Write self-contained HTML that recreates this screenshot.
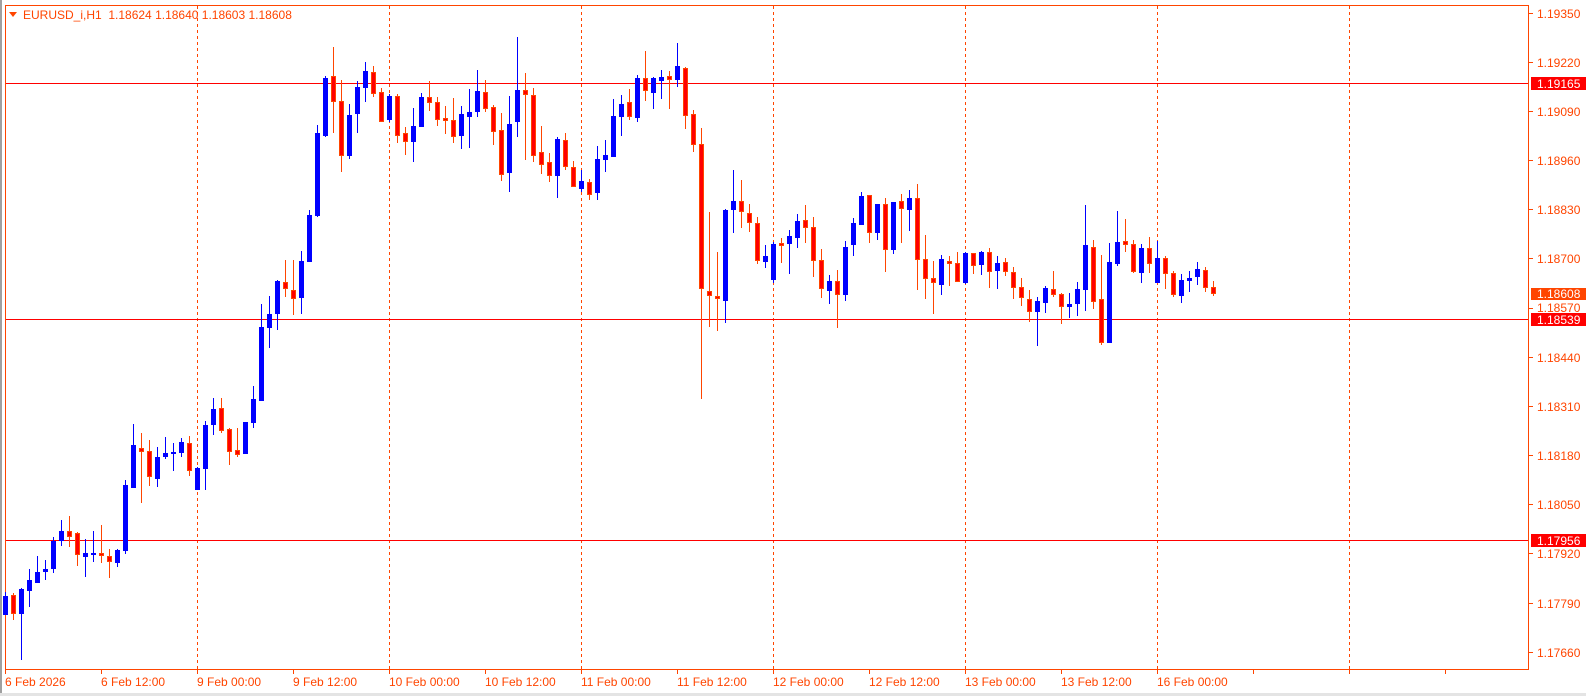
<!DOCTYPE html>
<html><head><meta charset="utf-8"><style>
html,body{margin:0;padding:0;background:#fff;width:1586px;height:696px;overflow:hidden}
svg{display:block}
text{font-family:"Liberation Sans",Arial,sans-serif;font-size:12px}
</style></head><body>
<svg width="1586" height="696" viewBox="0 0 1586 696" xmlns="http://www.w3.org/2000/svg">
<rect x="0" y="0" width="1586" height="696" fill="#fff"/>
<rect x="0" y="0" width="2" height="694" fill="#a0a0a0"/>
<rect x="0" y="693" width="1586" height="3" fill="#e4e4e4"/>
<g stroke="#ff4500" stroke-width="1" stroke-dasharray="3,3">
<path d="M197.5 6V669M389.5 6V669M581.5 6V669M773.5 6V669M965.5 6V669M1157.5 6V669M1349.5 6V669"/>
</g>
<g stroke="#ff0000" stroke-width="1">
<path d="M5 83.5H1529M5 319.5H1529M5 540.5H1529"/>
</g>
<rect x="5.5" y="5.5" width="1523" height="664" fill="none" stroke="#ff4500"/>
<path stroke="#ff4500" d="M1529 13.5h4M1529 62.5h4M1529 111.5h4M1529 160.5h4M1529 209.5h4M1529 258.5h4M1529 308.5h4M1529 357.5h4M1529 406.5h4M1529 455.5h4M1529 504.5h4M1529 553.5h4M1529 603.5h4M1529 652.5h4"/>
<path stroke="#ff4500" d="M5.5 670v4M101.5 670v4M197.5 670v4M293.5 670v4M389.5 670v4M485.5 670v4M581.5 670v4M677.5 670v4M773.5 670v4M869.5 670v4M965.5 670v4M1061.5 670v4M1157.5 670v4M1253.5 670v4M1349.5 670v4M1445.5 670v4"/>
<g fill="#ff4500">
<text x="1537" y="18">1.19350</text>
<text x="1537" y="67">1.19220</text>
<text x="1537" y="116">1.19090</text>
<text x="1537" y="165">1.18960</text>
<text x="1537" y="214">1.18830</text>
<text x="1537" y="263">1.18700</text>
<text x="1537" y="312">1.18570</text>
<text x="1537" y="362">1.18440</text>
<text x="1537" y="411">1.18310</text>
<text x="1537" y="460">1.18180</text>
<text x="1537" y="509">1.18050</text>
<text x="1537" y="558">1.17920</text>
<text x="1537" y="608">1.17790</text>
<text x="1537" y="657">1.17660</text>
</g>
<rect x="1531" y="77" width="55" height="13" fill="#ff0000"/>
<rect x="1531" y="288" width="55" height="12" fill="#ff4500"/>
<rect x="1531" y="313" width="55" height="13" fill="#ff0000"/>
<rect x="1531" y="534" width="55" height="13" fill="#ff0000"/>
<g fill="#fff">
<text x="1537" y="88">1.19165</text>
<text x="1537" y="298">1.18608</text>
<text x="1537" y="324">1.18539</text>
<text x="1537" y="545">1.17956</text>
</g>
<g fill="#ff4500">
<text x="5" y="686">6 Feb 2026</text>
<text x="101" y="686">6 Feb 12:00</text>
<text x="197" y="686">9 Feb 00:00</text>
<text x="293" y="686">9 Feb 12:00</text>
<text x="389" y="686">10 Feb 00:00</text>
<text x="485" y="686">10 Feb 12:00</text>
<text x="581" y="686">11 Feb 00:00</text>
<text x="677" y="686">11 Feb 12:00</text>
<text x="773" y="686">12 Feb 00:00</text>
<text x="869" y="686">12 Feb 12:00</text>
<text x="965" y="686">13 Feb 00:00</text>
<text x="1061" y="686">13 Feb 12:00</text>
<text x="1157" y="686">16 Feb 00:00</text>
</g>
<path d="M9 12h8l-4 5z" fill="#ff4500"/>
<text x="23" y="19" fill="#ff4500">EURUSD_i,H1&#160;&#160;1.18624 1.18640 1.18603 1.18608</text>
<path stroke="#0000ff" stroke-width="1" fill="none" d="M5.5 592V615M21.5 588V660M29.5 569V607M37.5 556V583M45.5 560V580M53.5 537V573M61.5 520V546M85.5 539V577M93.5 531V562M117.5 549V567M125.5 480V554M133.5 424V488M157.5 447V487M165.5 437V459M173.5 443V471M181.5 438V457M197.5 467V490M205.5 421V490M213.5 398V435M245.5 422V454M253.5 386V428M261.5 304V401M269.5 296V348M277.5 280V330M301.5 251V314M309.5 210V262M317.5 125V217M325.5 76V137M349.5 104V159M357.5 81V133M365.5 62V102M389.5 94V122M413.5 108V162M421.5 93V127M461.5 106V149M469.5 89V148M477.5 70V117M509.5 96V192M517.5 37V137M557.5 137V198M581.5 170V192M597.5 146V200M605.5 140V172M613.5 99V157M621.5 95V136M637.5 75V122M653.5 77V109M661.5 70V99M677.5 43V87M725.5 209V323M733.5 170V233M765.5 245V268M773.5 242V283M789.5 230V274M797.5 214V248M829.5 275V304M845.5 241V301M853.5 218V256M861.5 192V225M877.5 204V240M893.5 202V254M909.5 190V231M941.5 255V295M965.5 252V284M981.5 251V275M997.5 256V289M1037.5 297V346M1045.5 286V313M1069.5 293V318M1077.5 282V316M1085.5 205V311M1109.5 243V343M1117.5 211V266M1141.5 244V283M1157.5 241V283M1181.5 274V303M1189.5 271V292M1197.5 262V285"/>
<path fill="#0000ff" d="M3 596h5V615h-5zM19 589h5V614h-5zM27 580h5V591h-5zM35 572h5V583h-5zM43 569h5V572h-5zM51 541h5V569h-5zM59 531h5V541h-5zM83 553h5V557h-5zM91 553h5V555h-5zM115 550h5V563h-5zM123 485h5V551h-5zM131 445h5V488h-5zM155 457h5V479h-5zM163 453h5V457h-5zM171 452h5V454h-5zM179 442h5V453h-5zM195 468h5V490h-5zM203 425h5V469h-5zM211 409h5V425h-5zM243 422h5V454h-5zM251 399h5V423h-5zM259 327h5V401h-5zM267 314h5V328h-5zM275 281h5V314h-5zM299 261h5V298h-5zM307 215h5V262h-5zM315 133h5V216h-5zM323 78h5V136h-5zM347 115h5V156h-5zM355 87h5V114h-5zM363 71h5V88h-5zM387 96h5V120h-5zM411 126h5V142h-5zM419 97h5V127h-5zM459 114h5V136h-5zM467 112h5V117h-5zM475 91h5V112h-5zM507 124h5V173h-5zM515 90h5V122h-5zM555 139h5V176h-5zM579 181h5V189h-5zM595 159h5V193h-5zM603 155h5V160h-5zM611 116h5V157h-5zM619 104h5V117h-5zM635 78h5V118h-5zM651 78h5V93h-5zM659 77h5V81h-5zM675 66h5V80h-5zM723 210h5V301h-5zM731 201h5V210h-5zM763 256h5V262h-5zM771 244h5V280h-5zM787 236h5V244h-5zM795 221h5V238h-5zM827 281h5V291h-5zM843 247h5V295h-5zM851 223h5V245h-5zM859 196h5V225h-5zM875 204h5V233h-5zM891 202h5V250h-5zM907 198h5V210h-5zM939 259h5V285h-5zM963 253h5V283h-5zM979 252h5V265h-5zM995 263h5V271h-5zM1035 301h5V312h-5zM1043 288h5V303h-5zM1067 304h5V307h-5zM1075 289h5V304h-5zM1083 245h5V290h-5zM1107 262h5V343h-5zM1115 242h5V264h-5zM1139 248h5V273h-5zM1155 258h5V283h-5zM1179 280h5V296h-5zM1187 278h5V281h-5zM1195 269h5V277h-5z"/>
<path stroke="#ff4500" stroke-width="1" fill="none" d="M13.5 593V620M69.5 516V547M77.5 532V566M101.5 525V563M109.5 549V578M141.5 433V503M149.5 440V486M189.5 436V476M221.5 398V433M229.5 428V465M237.5 428V457M285.5 260V297M293.5 260V315M333.5 47V133M341.5 80V172M373.5 66V97M381.5 88V122M397.5 94V143M405.5 127V155M429.5 81V111M437.5 97V126M445.5 106V134M453.5 98V143M485.5 80V112M493.5 105V145M501.5 113V181M525.5 73V160M533.5 88V162M541.5 126V174M549.5 153V182M565.5 133V170M573.5 161V187M589.5 179V200M629.5 89V120M645.5 51V101M669.5 71V109M685.5 67V129M693.5 110V152M701.5 128V399M709.5 212V327M717.5 252V331M741.5 180V228M749.5 204V232M757.5 217V264M781.5 238V263M805.5 205V243M813.5 217V277M821.5 249V298M837.5 270V328M869.5 195V243M885.5 198V272M901.5 194V243M917.5 184V290M925.5 235V299M933.5 261V314M949.5 256V286M957.5 252V282M973.5 253V274M989.5 248V288M1005.5 258V276M1013.5 267V299M1021.5 278V306M1029.5 290V322M1053.5 271V297M1061.5 293V324M1093.5 240V309M1101.5 255V345M1125.5 219V252M1133.5 240V273M1149.5 237V273M1165.5 256V289M1173.5 271V297M1205.5 267V292M1213.5 281V296"/>
<path fill="#ff0000" stroke="#ff4500" stroke-width="1" d="M11.5 595.5h4V613.5h-4zM67.5 531.5h4V536.5h-4zM75.5 533.5h4V554.5h-4zM99.5 553.5h4V555.5h-4zM107.5 556.5h4V561.5h-4zM139.5 448.5h4V451.5h-4zM147.5 451.5h4V476.5h-4zM187.5 443.5h4V470.5h-4zM219.5 408.5h4V430.5h-4zM227.5 429.5h4V451.5h-4zM235.5 450.5h4V454.5h-4zM283.5 282.5h4V288.5h-4zM291.5 290.5h4V298.5h-4zM331.5 76.5h4V101.5h-4zM339.5 101.5h4V155.5h-4zM371.5 72.5h4V93.5h-4zM379.5 92.5h4V121.5h-4zM395.5 96.5h4V135.5h-4zM403.5 133.5h4V141.5h-4zM427.5 97.5h4V102.5h-4zM435.5 102.5h4V119.5h-4zM443.5 118.5h4V120.5h-4zM451.5 120.5h4V136.5h-4zM483.5 92.5h4V108.5h-4zM491.5 107.5h4V131.5h-4zM499.5 130.5h4V174.5h-4zM523.5 90.5h4V94.5h-4zM531.5 95.5h4V155.5h-4zM539.5 152.5h4V164.5h-4zM547.5 162.5h4V175.5h-4zM563.5 140.5h4V166.5h-4zM571.5 167.5h4V186.5h-4zM587.5 182.5h4V194.5h-4zM627.5 102.5h4V116.5h-4zM643.5 78.5h4V90.5h-4zM667.5 76.5h4V79.5h-4zM683.5 68.5h4V115.5h-4zM691.5 114.5h4V144.5h-4zM699.5 144.5h4V288.5h-4zM707.5 291.5h4V295.5h-4zM715.5 296.5h4V298.5h-4zM739.5 201.5h4V211.5h-4zM747.5 213.5h4V222.5h-4zM755.5 223.5h4V260.5h-4zM779.5 243.5h4V245.5h-4zM803.5 220.5h4V227.5h-4zM811.5 227.5h4V260.5h-4zM819.5 260.5h4V288.5h-4zM835.5 281.5h4V294.5h-4zM867.5 195.5h4V232.5h-4zM883.5 204.5h4V249.5h-4zM899.5 201.5h4V208.5h-4zM915.5 198.5h4V259.5h-4zM923.5 259.5h4V278.5h-4zM931.5 278.5h4V282.5h-4zM947.5 261.5h4V263.5h-4zM955.5 263.5h4V281.5h-4zM971.5 253.5h4V265.5h-4zM987.5 252.5h4V271.5h-4zM1003.5 262.5h4V271.5h-4zM1011.5 272.5h4V287.5h-4zM1019.5 287.5h4V297.5h-4zM1027.5 299.5h4V311.5h-4zM1051.5 289.5h4V294.5h-4zM1059.5 294.5h4V306.5h-4zM1091.5 247.5h4V301.5h-4zM1099.5 299.5h4V342.5h-4zM1123.5 241.5h4V244.5h-4zM1131.5 244.5h4V271.5h-4zM1147.5 248.5h4V263.5h-4zM1163.5 258.5h4V273.5h-4zM1171.5 273.5h4V294.5h-4zM1203.5 270.5h4V287.5h-4zM1211.5 287.5h4V293.5h-4z"/>
</svg>
</body></html>
